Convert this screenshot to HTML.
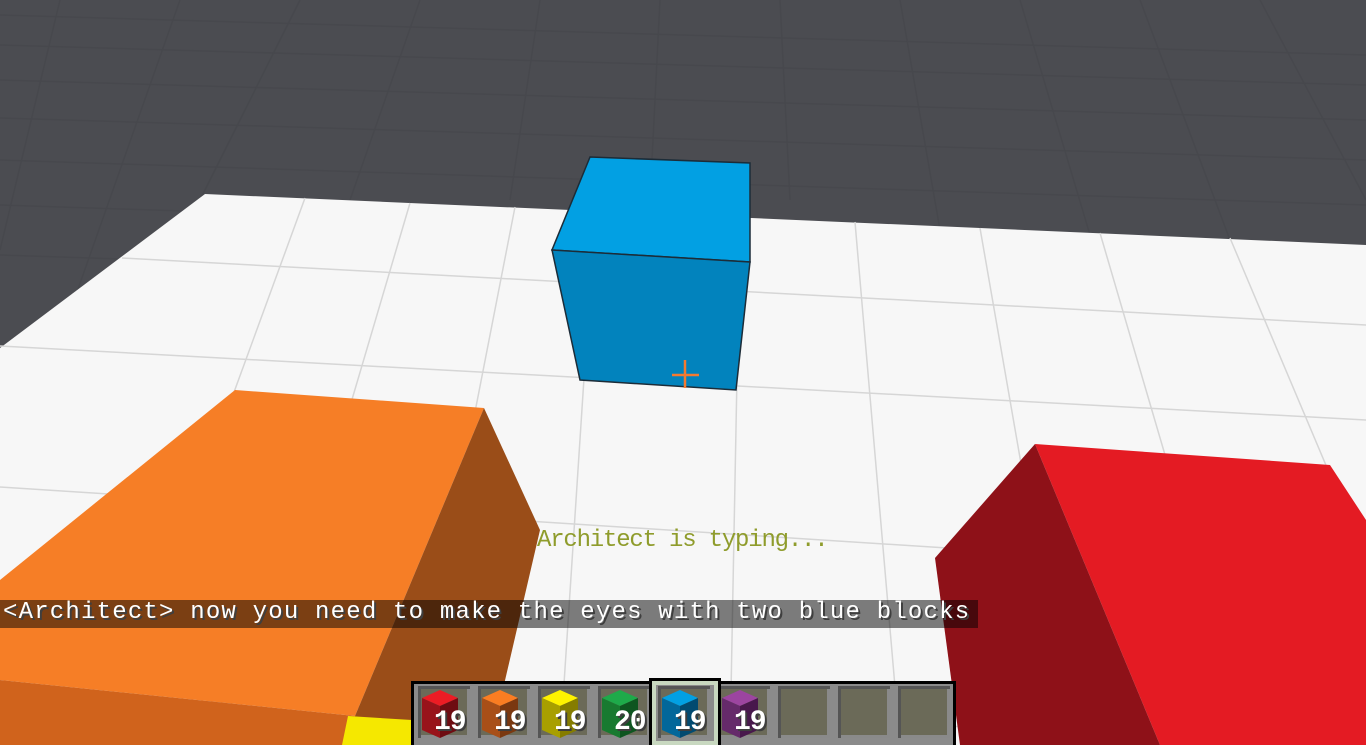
<!DOCTYPE html>
<html><head><meta charset="utf-8"><style>
html,body{margin:0;padding:0;width:1366px;height:745px;overflow:hidden;background:#4b4c51}
svg{position:absolute;left:0;top:0}
.t{position:absolute;font-family:"Liberation Mono",monospace;white-space:pre}
.slot{position:absolute;top:686px;width:52px;height:52px;background:#6b6a58;box-shadow:inset 3px 3px 0 #555,inset -3px -3px 0 #8a8a8a}
.n{position:absolute;font-family:"Liberation Mono",monospace;font-weight:bold;font-size:28px;color:#fff;text-shadow:2px 2px 0 #3e3e3e;letter-spacing:-1px}
</style></head><body>
<svg width="1366" height="745" viewBox="0 0 1366 745">
<g stroke="#47484d" stroke-width="1.5" fill="none" opacity="0.8">
<path d="M0 15 L1366 55 M0 45 L1366 85 M0 80 L1366 120 M0 118 L1366 160 M0 160 L1366 205 M0 205 L1366 250 M0 255 L1366 300"/>
<path d="M60 0 L0 250 M180 0 L60 340 M300 0 L200 200 M420 0 L350 200 M540 0 L510 200 M660 0 L650 200 M780 0 L790 200 M900 0 L940 230 M1020 0 L1090 235 M1140 0 L1230 240 M1260 0 L1366 200"/>
</g>
<polygon points="205,194 1366,245 1366,745 0,745 0,348" fill="#f7f7f7"/>
<g stroke="#d6d6d6" stroke-width="1.5" fill="none">
<path d="M122 258 L1366 325 M0 346 L1366 420 M0 487 L1366 575 M0 695 L1366 740"/>
<path d="M305 198 L105 745 M410 203 L250 745 M515 207 L410 745 M595 210 L560 745 M740 217 L730 745 M855 222 L900 745 M980 228 L1070 745 M1100 233 L1250 745 M1230 238 L1366 560"/>
</g>
<polygon points="590,157 750,163 750,262 552,250" fill="#02a0e3" stroke="#1c2c38" stroke-width="1.5"/>
<polygon points="552,250 750,262 736,390 580,380" fill="#0283bd" stroke="#1c2c38" stroke-width="1.5"/>
<path d="M685 360 V388 M672 375 H699" stroke="#f47a30" stroke-width="2.5"/>
<polygon points="235,390 484,408 355,716 0,680 0,580" fill="#f67e26"/>
<polygon points="484,408 540,530 490,745 345,745 355,716" fill="#9a4d18"/>
<polygon points="0,680 355,716 345,745 0,745" fill="#d0631c"/>
<polygon points="348,716 412,720 412,745 342,745" fill="#f5e800"/>
<polygon points="1035,444 1330,465 1366,520 1366,745 1160,745" fill="#e41b23"/>
<polygon points="1035,444 935,558 960,745 1160,745" fill="#8e1118"/>
</svg>
<div class="t" style="left:537px;top:527px;font-size:24px;color:#8f9c2c;letter-spacing:-1.2px">Architect is typing...</div>
<div style="position:absolute;left:0;top:600px;width:978px;height:28px;background:rgba(0,0,0,0.5)"></div>
<div class="t" style="left:3px;top:599px;font-size:24px;color:#fff;text-shadow:2px 2px 0 #3f3f3f;letter-spacing:1.2px">&lt;Architect&gt; now you need to make the eyes with two blue blocks</div>
<div style="position:absolute;left:411px;top:681px;width:545px;height:64px;background:#000"></div>
<div style="position:absolute;left:414px;top:684px;width:539px;height:61px;background:#8b8b8b"></div>
<div class="slot" style="left:418px"></div><div class="slot" style="left:478px"></div><div class="slot" style="left:538px"></div><div class="slot" style="left:598px"></div><div class="slot" style="left:658px"></div><div class="slot" style="left:718px"></div><div class="slot" style="left:778px"></div><div class="slot" style="left:838px"></div><div class="slot" style="left:898px"></div>
<div style="position:absolute;left:649px;top:678px;width:72px;height:67px;border:3px solid #000;box-sizing:border-box"></div>
<div style="position:absolute;left:652px;top:681px;width:66px;height:64px;border:4px solid #c8d8c0;box-sizing:border-box"></div>
<svg width="1366" height="745" viewBox="0 0 1366 745" style="z-index:2">
<polygon points="422,698 440,690 458,698 440,706" fill="#ec1c24"/><polygon points="422,698 440,706 440,738 422,730" fill="#98131a"/><polygon points="440,706 458,698 458,730 440,738" fill="#6e0c12"/>
<polygon points="482,698 500,690 518,698 500,706" fill="#fa7d22"/><polygon points="482,698 500,706 500,738 482,730" fill="#a84f18"/><polygon points="500,706 518,698 518,730 500,738" fill="#7a3810"/>
<polygon points="542,698 560,690 578,698 560,706" fill="#fff200"/><polygon points="542,698 560,706 560,738 542,730" fill="#a89f00"/><polygon points="560,706 578,698 578,730 560,738" fill="#857c00"/>
<polygon points="602,698 620,690 638,698 620,706" fill="#1eaa4a"/><polygon points="602,698 620,706 620,738 602,730" fill="#187a30"/><polygon points="620,706 638,698 638,730 620,738" fill="#0e5520"/>
<polygon points="662,698 680,690 698,698 680,706" fill="#02a0e3"/><polygon points="662,698 680,706 680,738 662,730" fill="#02679a"/><polygon points="680,706 698,698 698,730 680,738" fill="#024a70"/>
<polygon points="722,698 740,690 758,698 740,706" fill="#9c45a0"/><polygon points="722,698 740,706 740,738 722,730" fill="#652a6a"/><polygon points="740,706 758,698 758,730 740,738" fill="#48184c"/>
</svg>
<div style="z-index:3;position:absolute;left:0;top:0">
<div class="n" style="left:434px;top:707px">19</div><div class="n" style="left:494px;top:707px">19</div><div class="n" style="left:554px;top:707px">19</div><div class="n" style="left:614px;top:707px">20</div><div class="n" style="left:674px;top:707px">19</div><div class="n" style="left:734px;top:707px">19</div>
</div>
</body></html>
